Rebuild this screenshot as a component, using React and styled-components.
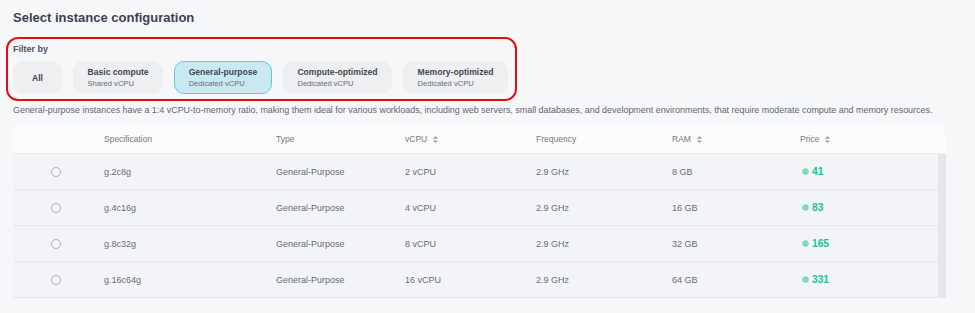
import React from 'react';
import styled, { createGlobalStyle } from 'styled-components';

const GlobalStyle = createGlobalStyle`
  html, body {
    margin: 0;
    padding: 0;
    background: #f6f7f9;
    font-family: "Liberation Sans", Arial, sans-serif;
  }
`;

const FILTERS = [
  { name: 'All' },
  { name: 'Basic compute', sub: 'Shared vCPU' },
  { name: 'General-purpose', sub: 'Dedicated vCPU', active: true },
  { name: 'Compute-optimized', sub: 'Dedicated vCPU' },
  { name: 'Memory-optimized', sub: 'Dedicated vCPU' },
];

const ROWS = [
  { spec: 'g.2c8g', vcpu: '2 vCPU', ram: '8 GB', price: 41 },
  { spec: 'g.4c16g', vcpu: '4 vCPU', ram: '16 GB', price: 83 },
  { spec: 'g.8c32g', vcpu: '8 vCPU', ram: '32 GB', price: 165 },
  { spec: 'g.16c64g', vcpu: '16 vCPU', ram: '64 GB', price: 331 },
];

const SortIcon = () => (
  <SortSvg viewBox="0 0 8 10" width="7" height="9">
    <path d="M1 4 L4 1 L7 4 Z" fill="#9aa1ab" />
    <path d="M1 6 L4 9 L7 6 Z" fill="#9aa1ab" />
  </SortSvg>
);

const CoinIcon = () => (
  <svg viewBox="0 0 10 10" width="7" height="7">
    <circle cx="5" cy="5" r="4.8" fill="#8fe0c8" />
    <circle cx="5" cy="5" r="3.2" fill="none" stroke="#4fcfa6" strokeWidth="0.8" />
    <path d="M5 3.2 V6.8" stroke="#4fcfa6" strokeWidth="1" />
  </svg>
);

const App = () => (
  <>
    <GlobalStyle />
    <Page>
      <Title>Select instance configuration</Title>
      <FilterBox>
        <FilterLabel>Filter by</FilterLabel>
        <FilterRow>
          {FILTERS.map((f) => (
            <FilterButton key={f.name} $active={f.active} $single={!f.sub}>
              <FilterName>{f.name}</FilterName>
              {f.sub && <FilterSub>{f.sub}</FilterSub>}
            </FilterButton>
          ))}
        </FilterRow>
      </FilterBox>
      <Description>
        General-purpose instances have a 1:4 vCPU-to-memory ratio, making them ideal for various workloads, including web servers, small databases, and development environments, that require moderate compute and memory resources.
      </Description>
      <Table>
        <HeaderRow>
          <Cell />
          <Cell>Specification</Cell>
          <Cell>Type</Cell>
          <Cell>vCPU <SortIcon /></Cell>
          <Cell>Frequency</Cell>
          <Cell>RAM <SortIcon /></Cell>
          <Cell>Price <SortIcon /></Cell>
        </HeaderRow>
        <Body>
          <Rows>
            {ROWS.map((r) => (
              <Row key={r.spec}>
                <Cell><Radio /></Cell>
                <Cell>{r.spec}</Cell>
                <Cell>General-Purpose</Cell>
                <Cell>{r.vcpu}</Cell>
                <Cell>2.9 GHz</Cell>
                <Cell>{r.ram}</Cell>
                <Cell><Price><CoinIcon />{r.price}</Price></Cell>
              </Row>
            ))}
          </Rows>
          <Scrollbar />
        </Body>
      </Table>
    </Page>
  </>
);

const Page = styled.div`
  padding: 9px 29px 15px 13px;
  display: flex;
  flex-direction: column;
`;

const Title = styled.h2`
  margin: 0;
  font-size: 13px;
  font-weight: 700;
  color: #3b4250;
  line-height: 18px;
`;

const FilterBox = styled.div`
  align-self: flex-start;
  margin: 10px 0 0 -7px;
  padding: 4px 7px 5px 5px;
  border: 2.5px solid #ea0a12;
  border-radius: 12px;
`;

const FilterLabel = styled.div`
  font-size: 9px;
  font-weight: 700;
  color: #4a5260;
  line-height: 12px;
`;

const FilterRow = styled.div`
  display: flex;
  gap: 11px;
  margin-top: 6px;
`;

const FilterButton = styled.div`
  display: flex;
  flex-direction: column;
  justify-content: center;
  align-items: ${(p) => (p.$single ? 'center' : 'flex-start')};
  height: 33px;
  box-sizing: border-box;
  padding: 0 ${(p) => (p.$single ? '18px' : '13.5px')};
  border-radius: 10px;
  background: ${(p) => (p.$active ? '#c9e9f0' : '#eeeff1')};
  border: 1px solid ${(p) => (p.$active ? '#5ccbe0' : '#eeeff1')};
`;

const FilterName = styled.div`
  font-size: 8.6px;
  font-weight: 700;
  color: #3f4755;
  line-height: 12px;
`;

const FilterSub = styled.div`
  font-size: 7.6px;
  color: #666e7a;
  line-height: 11px;
`;

const Description = styled.p`
  margin: 3px 0 0;
  font-size: 8.93px;
  color: #5e6673;
  line-height: 13px;
`;

const Table = styled.div`
  margin-top: 8px;
  display: flex;
  flex-direction: column;
`;

const columns = '91px 172px 129px 131px 136px 128px 1fr';

const HeaderRow = styled.div`
  display: grid;
  grid-template-columns: ${columns};
  align-items: center;
  height: 28px;
  background: #fbfbfc;
  border-radius: 10px 10px 0 0;
  border-bottom: 1px solid #eceef1;
  font-size: 8.5px;
  color: #737a85;
`;

const Body = styled.div`
  display: flex;
`;

const Rows = styled.div`
  flex: 1;
  display: flex;
  flex-direction: column;
`;

const Scrollbar = styled.div`
  width: 8px;
  background: #e4e6e9;
`;

const Row = styled.div`
  display: grid;
  grid-template-columns: ${columns};
  align-items: center;
  box-sizing: border-box;
  height: 36px;
  background: #f3f4f7;
  border-bottom: 1px solid #e5e7eb;
  font-size: 9px;
  color: #656d78;
`;

const Cell = styled.div`
  display: flex;
  align-items: center;
  gap: 5px;
`;

const SortSvg = styled.svg`
  display: block;
`;

const Radio = styled.span`
  width: 10px;
  height: 10px;
  margin-left: 38px;
  border-radius: 50%;
  border: 1px solid #a8afb8;
  box-sizing: border-box;
`;

const Price = styled.span`
  display: flex;
  align-items: center;
  gap: 3px;
  margin-left: 2px;
  font-size: 10.2px;
  font-weight: 700;
  color: #1bc28e;
`;

export default App;
